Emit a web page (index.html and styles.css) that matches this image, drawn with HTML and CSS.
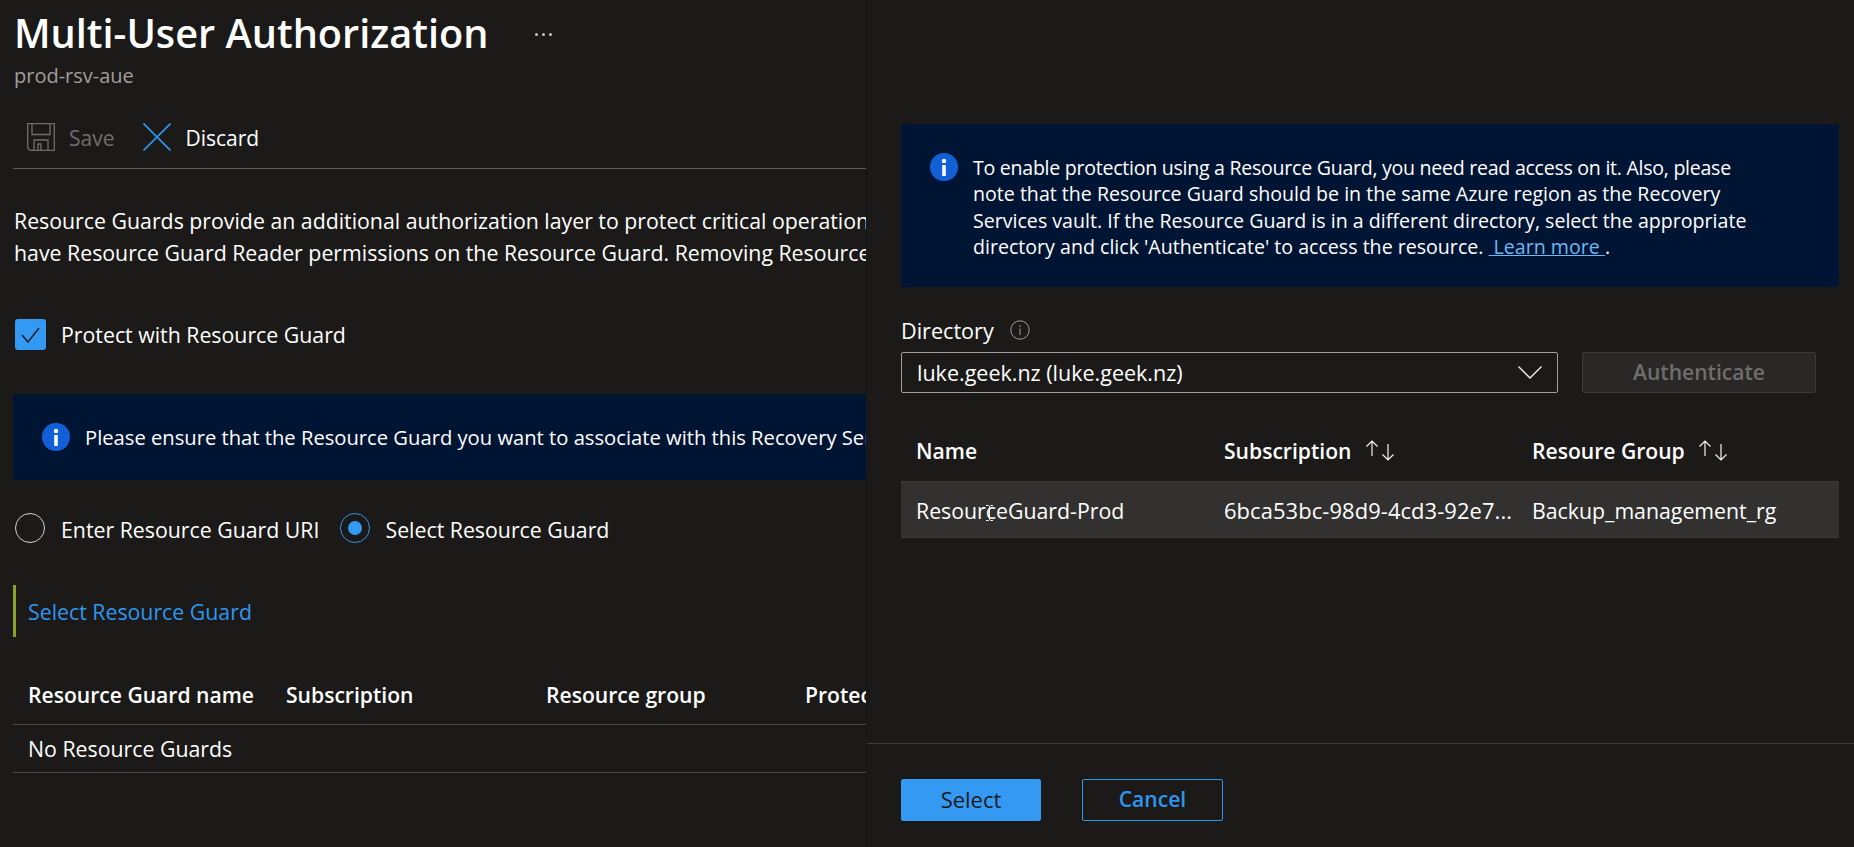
FILE: index.html
```html
<!DOCTYPE html>
<html lang="en">
<head>
    <meta charset="UTF-8">
    <title>Multi-User Authorization</title>
    <link rel="stylesheet" href="styles.css">
</head>
<body>
<div class="page">
    <div class="blade">
        <div class="title-row">
            <h1 class="title">Multi-User Authorization</h1>
            <span class="more">
                <i></i><i></i><i></i>
            </span>
        </div>
        <div class="subtitle">prod-rsv-aue</div>
        <div class="toolbar">
            <span class="tool tool-off">
                <svg width="28" height="28" viewBox="0 0 28 28" fill="none" stroke="#6f6e6c" stroke-width="1.3">
                    <path d="M.7.7h26.6v26.6H3L.7 25z"/>
                    <path d="M5 .7v10.8h18V.7"/>
                    <path d="M7 27.3V17h14v10.3"/>
                    <path d="M11 27v-6h3v6"/>
                </svg>
                <span class="tool-text">Save</span>
            </span>
            <span class="tool">
                <svg width="28" height="28" viewBox="0 0 28 28" fill="none" stroke="#2f96f0" stroke-width="1.6">
                    <path d="M.5.5l27 27M27.5.5l-27 27"/>
                </svg>
                <span class="tool-text">Discard</span>
            </span>
        </div>
        <p class="intro">Resource Guards provide an additional authorization layer to protect critical operation<br>have Resource Guard Reader permissions on the Resource Guard. Removing Resource</p>
        <div class="check-row">
            <span class="checkbox">
                <svg width="19" height="16" viewBox="0 0 19 16" fill="none" stroke="#1b1a19" stroke-width="1.4">
                    <path d="M1 8l6 7L18 1"/>
                </svg>
            </span>
            Protect with Resource Guard
        </div>
        <div class="notice">
            <svg class="info" width="28" height="28" viewBox="0 0 28 28">
                <circle cx="14" cy="14" r="14" fill="#1160d8"/>
                <circle cx="14" cy="8" r="2.2" fill="#fff"/>
                <rect x="12.2" y="12" width="3.6" height="11" fill="#fff"/>
            </svg>
            Please ensure that the Resource Guard you want to associate with this Recovery Serv
        </div>
        <div class="radio-row">
            <span class="radio"></span>
            <span class="radio-label">Enter Resource Guard URI</span>
            <span class="radio radio-on"></span>
            <span>Select Resource Guard</span>
        </div>
        <div class="link-box">Select Resource Guard</div>
        <div class="guard-head">
            <span>Resource Guard name</span>
            <span>Subscription</span>
            <span>Resource group</span>
            <span>Protec</span>
        </div>
        <div class="guard-row">No Resource Guards</div>
    </div>

    <div class="panel">
        <div class="panel-body">
            <div class="panel-notice">
                <svg class="info" width="28" height="28" viewBox="0 0 28 28">
                    <circle cx="14" cy="14" r="14" fill="#1160d8"/>
                    <circle cx="14" cy="8" r="2.2" fill="#fff"/>
                    <rect x="12.2" y="12" width="3.6" height="11" fill="#fff"/>
                </svg>
                <p><span class="tight">To enable protection using a Resource Guard, you need read access on it. Also, please</span><br>note that the Resource Guard should be in the same Azure region as the Recovery<br>Services vault. If the Resource Guard is in a different directory, select the appropriate<br>directory and click 'Authenticate' to access the resource. <a href="#">&nbsp;Learn more&nbsp;</a>.</p>
            </div>
            <div class="dir-label">
                Directory
                <svg width="20" height="20" viewBox="0 0 20 20" fill="none" stroke="#a19f9d">
                    <circle cx="10" cy="10" r="9.2"/>
                    <path d="M10 8.5v6.5M10 5v2"/>
                </svg>
            </div>
            <div class="dir-row">
                <div class="dir-select">
                    luke.geek.nz (luke.geek.nz)
                    <svg width="24" height="13" viewBox="0 0 24 13" fill="none" stroke="#f3f2f1" stroke-width="1.4">
                        <path d="M.5.5L12 12 23.5.5"/>
                    </svg>
                </div>
                <div class="auth-btn">Authenticate</div>
            </div>
            <div class="res-head">
                <span>Name</span>
                <span class="sortable">Subscription
                    <svg width="30" height="21" viewBox="0 0 30 21" fill="none" stroke="#f3f2f1" stroke-width="1.2">
                        <path d="M7 16V1M1.500 6.500L7 1l5.500 5.500M23 4v16M17.500 14.500L23 20l5.500-5.500"/>
                    </svg>
                </span>
                <span class="sortable">Resoure Group
                    <svg width="30" height="21" viewBox="0 0 30 21" fill="none" stroke="#f3f2f1" stroke-width="1.2">
                        <path d="M7 16V1M1.500 6.500L7 1l5.500 5.500M23 4v16M17.500 14.500L23 20l5.500-5.500"/>
                    </svg>
                </span>
            </div>
            <div class="res-row">
                <span>ResourceGuard-Prod</span>
                <span class="res-id">6bca53bc-98d9-4cd3-92e7...</span>
                <span>Backup_management_rg</span>
                <svg class="ibeam" width="9" height="16" viewBox="0 0 9 16" fill="none" stroke="#f3f2f1">
                    <path d="M1 .5h2.500L4.500 1.500 5.500.5H8M4.500 1.500v13M1 15.500h2.500l1-1 1 1H8"/>
                </svg>
            </div>
        </div>
        <div class="panel-foot">
            <div class="btn btn-primary">Select</div>
            <div class="btn btn-outline">Cancel</div>
        </div>
    </div>
</div>
</body>
</html>
```

FILE: styles.css
```css
* {
    margin: 0;
    padding: 0;
    box-sizing: border-box;
}

body {
    background: #1b1a19;
    color: #f3f2f1;
    font-family: "Open Sans", "Noto Sans", sans-serif;
    font-size: 21.3px;
    overflow: hidden;
}

.page {
    display: flex;
    width: 1854px;
    height: 847px;
    overflow: hidden;
}

/* left blade */
.blade {
    width: 866px;
    flex: none;
    overflow: hidden;
    white-space: nowrap;
}

.title-row {
    display: flex;
    align-items: center;
    height: 48px;
    margin-top: 9px;
    padding-left: 14px;
}

.title {
    font-size: 39.7px;
    line-height: 48px;
    font-weight: 600;
    color: #fff;
}

.more {
    display: flex;
    gap: 4px;
    margin-top: 2px;
    margin-left: 47px;
}

.more i {
    width: 3px;
    height: 3px;
    border-radius: 50%;
    background: #c8c6c4;
}

.subtitle {
    height: 28px;
    margin-top: 5px;
    padding-left: 14px;
    line-height: 28px;
    font-size: 20px;
    color: #a19f9d;
}

.toolbar {
    display: flex;
    gap: 29px;
    height: 60px;
    margin: 19px 0 0 13px;
    padding: 14px 0 0 14px;
    border-bottom: 1px solid #5c5b59;
}

.tool {
    display: flex;
    align-items: center;
    gap: 14px;
    height: 28px;
    font-size: 21px;
    color: #fff;
}

.tool-text {
    margin-top: 2px;
}

.tool-off {
    color: #6f6e6c;
}

.intro {
    margin-top: 36px;
    padding-left: 14px;
    line-height: 32px;
    font-size: 21.3px;
    color: #fff;
}

.check-row {
    display: flex;
    align-items: center;
    gap: 15px;
    height: 31px;
    margin-top: 50px;
    padding-left: 15px;
    color: #fff;
}

.checkbox {
    display: flex;
    align-items: center;
    justify-content: center;
    width: 31px;
    height: 31px;
    border-radius: 3px;
    background: #3399f3;
}

.notice {
    display: flex;
    align-items: center;
    gap: 15px;
    height: 86px;
    margin: 44px 0 0 13px;
    padding-left: 29px;
    border-radius: 2px;
    background: #001433;
    font-size: 20.2px;
    color: #fff;
}

.info {
    flex: none;
}

.radio-row {
    display: flex;
    align-items: center;
    height: 30px;
    margin-top: 33px;
    padding-left: 15px;
    color: #fff;
}

.radio-row span:not(.radio) {
    margin-top: 2px;
}

.radio {
    display: flex;
    align-items: center;
    justify-content: center;
    width: 30px;
    height: 30px;
    margin-right: 16px;
    border: 1px solid #d2d0ce;
    border-radius: 50%;
}

.radio-on {
    margin-right: 15px;
    border-color: #2f96f0;
}

.radio-on::after {
    content: "";
    width: 14px;
    height: 14px;
    border-radius: 50%;
    background: #3399f3;
}

.radio-label {
    margin-right: 21px;
}

.link-box {
    display: flex;
    align-items: center;
    height: 52px;
    margin: 42px 0 0 13px;
    padding-left: 12px;
    border-left: 3px solid #8ca32a;
    color: #2f96f0;
}

.guard-head {
    display: grid;
    grid-template-columns: 258px 260px 259px 100px;
    align-items: center;
    height: 59px;
    margin: 29px 0 0 13px;
    padding: 0 0 2px 15px;
    border-bottom: 1px solid #484644;
    font-size: 21.1px;
    font-weight: 600;
    color: #fff;
}

.guard-row {
    height: 48px;
    margin-left: 13px;
    padding: 2px 0 0 15px;
    border-bottom: 1px solid #484644;
    line-height: 44px;
    color: #fff;
}

/* right panel */
.panel {
    display: flex;
    flex-direction: column;
    flex: 1;
    min-width: 0;
    border-left: 1px solid #181716;
    white-space: nowrap;
}

.panel-body {
    flex: 1;
    padding: 124px 15px 0 34px;
}

.panel-notice {
    display: flex;
    gap: 15px;
    height: 163px;
    padding: 29px 0 0 29px;
    border-radius: 2px;
    background: #001433;
    color: #fff;
    font-size: 19.6px;
}

.panel-notice p {
    margin-top: 2px;
    line-height: 26.3px;
}

.panel-notice a {
    color: #6cb8f6;
    text-decoration: underline;
}

.tight {
    letter-spacing: -.28px;
}

.dir-label {
    display: flex;
    align-items: center;
    gap: 16px;
    height: 26px;
    margin-top: 30px;
    font-size: 21.6px;
    color: #fff;
}

.dir-row {
    display: flex;
    gap: 24px;
    margin-top: 9px;
}

.dir-select {
    display: flex;
    align-items: center;
    justify-content: space-between;
    width: 657px;
    height: 41px;
    padding: 0 15px 0 15px;
    border: 1px solid #a19f9d;
    border-radius: 2px;
    font-size: 21.5px;
    color: #fff;
}

.auth-btn {
    width: 234px;
    height: 41px;
    border: 1px solid #3b3a39;
    border-radius: 2px;
    background: #292827;
    line-height: 37px;
    text-align: center;
    font-size: 21.1px;
    font-weight: 600;
    color: #6f6e6c;
}

.res-head,
.res-row {
    display: grid;
    grid-template-columns: 308px 308px 1fr;
    align-items: center;
    padding-left: 15px;
}

.res-head {
    height: 48px;
    margin: 33px 0 7px;
    font-size: 21.1px;
    font-weight: 600;
    color: #fff;
}

.sortable {
    display: flex;
    align-items: center;
    gap: 13px;
}

.res-row {
    position: relative;
    height: 57px;
    padding-top: 2px;
    border-top: 1px solid #3b3a39;
    border-bottom: 1px solid #3b3a39;
    background: #323130;
    color: #fff;
}

.res-id {
    font-size: 21.9px;
    letter-spacing: .1px;
}

/* text cursor caught in the screenshot */
.ibeam {
    position: absolute;
    left: 84px;
    top: 23px;
}

.panel-foot {
    display: flex;
    gap: 41px;
    height: 104px;
    padding: 35px 0 0 34px;
    border-top: 1px solid #3b3a39;
}

.btn {
    width: 140px;
    height: 42px;
    border-radius: 2px;
    line-height: 38px;
    text-align: center;
    font-size: 21.1px;
    font-weight: 600;
}

.btn-primary {
    border: 1px solid #3399f3;
    background: #3399f3;
    color: #1b1a19;
    font-size: 22px;
    font-weight: 400;
}

.btn-outline {
    width: 141px;
    border: 1px solid #2f96f0;
    color: #2f96f0;
}
```
